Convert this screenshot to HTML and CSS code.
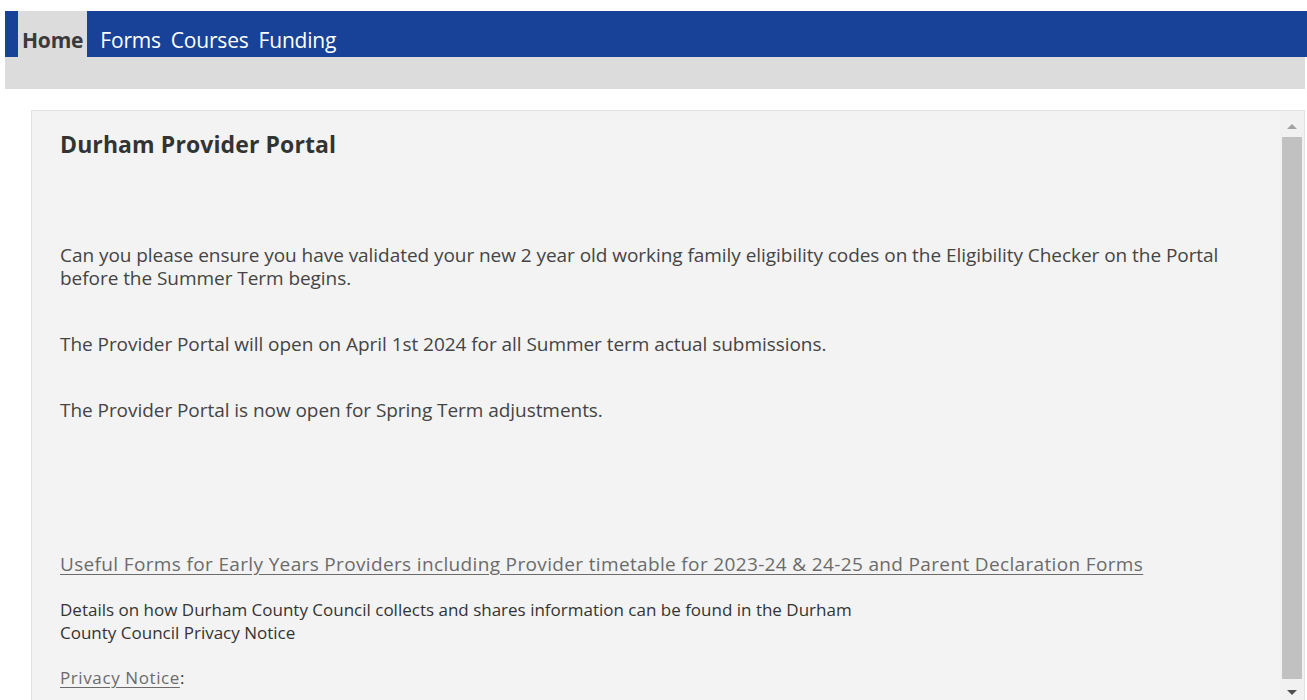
FILE: index.html
```html
<!DOCTYPE html>
<html lang="en">
<head>
<meta charset="utf-8">
<title>Durham Provider Portal</title>
<link rel="stylesheet" href="styles.css">
</head>
<body>
<div class="page">
  <nav class="topnav">
    <a class="tab active" href="#">Home</a>
    <a class="tab" href="#">Forms</a>
    <a class="tab" href="#">Courses</a>
    <a class="tab" href="#">Funding</a>
  </nav>
  <div class="subbar"></div>
  <main class="panel">
    <div class="panel-body">
      <h1 class="title">Durham Provider Portal</h1>
      <p class="lead first">Can you please ensure you have validated your new 2 year old working family eligibility codes on the Eligibility Checker on the Portal before the Summer Term begins.</p>
      <p class="lead">The Provider Portal will open on April 1st 2024 for all Summer term actual submissions.</p>
      <p class="lead">The Provider Portal is now open for Spring Term adjustments.</p>
      <p class="lead link-row"><a class="link" href="#">Useful Forms for Early Years Providers including Provider timetable for 2023-24 &amp; 24-25 and Parent Declaration Forms</a></p>
      <p class="small">Details on how Durham County Council collects and shares information can be found in the Durham<br>County Council Privacy Notice</p>
      <p class="small notice"><a class="link" href="#">Privacy Notice</a>:</p>
    </div>
    <div class="scrollbar">
      <span class="arrow up"></span>
      <span class="thumb"></span>
      <span class="arrow down"></span>
    </div>
  </main>
</div>
</body>
</html>
```
FILE: styles.css
```css
html, body {
  margin: 0;
  padding: 0;
  background: #ffffff;
}

body {
  font-family: "Open Sans", "Noto Sans", sans-serif;
  color: #3b3b3b;
  overflow: hidden;
}

.page {
  padding: 11px 0 0 5px;
}

/* top navigation */
.topnav {
  display: flex;
  align-items: stretch;
  height: 46px;
  background: #174297;
  padding-left: 13px;
}

.tab {
  display: flex;
  align-items: center;
  padding: 12px 5px 0 5px;
  font-size: 21px;
  color: #ffffff;
  text-decoration: none;
  letter-spacing: -0.2px;
}

.tab.active {
  background: #dcdcdc;
  color: #3a3a3a;
  font-weight: 700;
  padding: 12px 4px 0 4px;
  margin-right: 8px;
}

.subbar {
  height: 32px;
  background: #dcdcdc;
  margin-right: 2px;
}

/* content panel */
.panel {
  display: flex;
  margin: 21px 2px 0 26px;
  height: 600px;
  background: #f3f3f3;
  border: 1px solid #e3e3e3;
  box-sizing: border-box;
}

.panel-body {
  flex: 1;
  padding: 18px 20px 0 28px;
}

.title {
  margin: 0;
  font-size: 23px;
  font-weight: 700;
  line-height: 30px;
  color: #333333;
  letter-spacing: 0.1px;
}

.lead {
  margin: 0;
  font-size: 19px;
  line-height: 23px;
  letter-spacing: -0.05px;
  color: #444444;
}

.lead.first {
  margin-top: 85px;
}

.lead + .lead {
  margin-top: 43px;
}

.lead.link-row {
  margin-top: 131px;
}

.link {
  color: #6b6b6b;
  text-decoration: underline;
  text-underline-offset: 3px;
}

.link-row .link {
  letter-spacing: 0.35px;
}

.notice .link {
  letter-spacing: 0.6px;
}

.small {
  margin: 22px 0 0 0;
  font-size: 17px;
  line-height: 23px;
  letter-spacing: 0;
  color: #333333;
}

.small.notice {
  margin-top: 22px;
}

/* scrollbar column */
.scrollbar {
  width: 24px;
  display: flex;
  flex-direction: column;
  align-items: center;
  background: #f1f1f1;
}

.arrow {
  width: 0;
  height: 0;
  border-left: 5px solid transparent;
  border-right: 5px solid transparent;
}

.arrow.up {
  margin-top: 13px;
  border-bottom: 5px solid #a3a3a3;
}

.arrow.down {
  margin-top: 11px;
  border-top: 5px solid #505050;
}

.thumb {
  display: block;
  width: 20px;
  height: 542px;
  margin-top: 8px;
  background: #c1c1c1;
}
```
